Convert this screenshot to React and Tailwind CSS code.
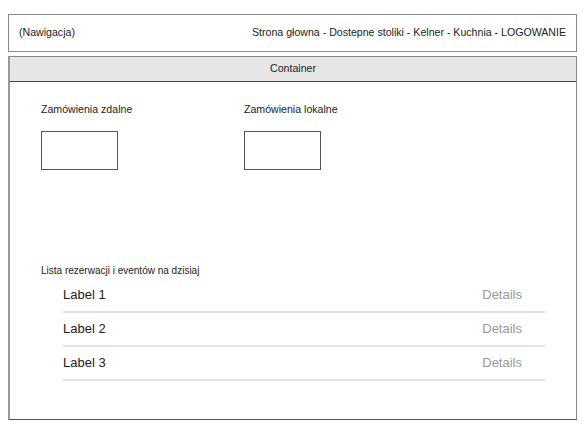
import React from 'react';

const rows = ['Label 1', 'Label 2', 'Label 3'];

export default function App() {
  return (
    <div className="w-[584px] h-[435px] bg-white pt-[14px] pl-[8px] pr-[7px] font-['Liberation_Sans',Arial,sans-serif] text-[#222]">
      {/* nav bar */}
      <div className="h-[38px] border border-[#888] flex items-center justify-between px-[10px] text-[10.6px]">
        <span>(Nawigacja)</span>
        <span>Strona głowna - Dostepne stoliki - Kelner - Kuchnia - LOGOWANIE</span>
      </div>

      {/* container */}
      <div className="mt-[4px] h-[364px] border border-[#888] border-l-2 border-l-[#999] border-b-[#555] flex flex-col">
        <div className="h-[25px] bg-[#e6e6e6] border-b border-[#444] flex items-center justify-center text-[10.6px]">
          Container
        </div>

        <div className="flex pl-[31px] pt-[20px]">
          <div className="w-[203px] flex flex-col">
            <span className="text-[10.6px] leading-[14px]">Zamówienia zdalne</span>
            <div className="mt-[15px] w-[77px] h-[39px] border border-[#555]" />
          </div>
          <div className="flex flex-col">
            <span className="text-[10.6px] leading-[14px]">Zamówienia lokalne</span>
            <div className="mt-[15px] w-[77px] h-[39px] border border-[#555]" />
          </div>
        </div>

        <div className="pl-[31px] mt-[94px] text-[10px] leading-[13px]">
          Lista rezerwacji i eventów na dzisiaj
        </div>

        <div className="ml-[53px] w-[482px] mt-[2px] flex flex-col">
          {rows.map((r) => (
            <div key={r} className="h-[34px] flex items-center justify-between border-b-2 border-[#e2e2e2] pr-[23px] text-[13px]">
              <span className="text-[#222]">{r}</span>
              <span className="text-[#999]">Details</span>
            </div>
          ))}
        </div>
      </div>
    </div>
  );
}
